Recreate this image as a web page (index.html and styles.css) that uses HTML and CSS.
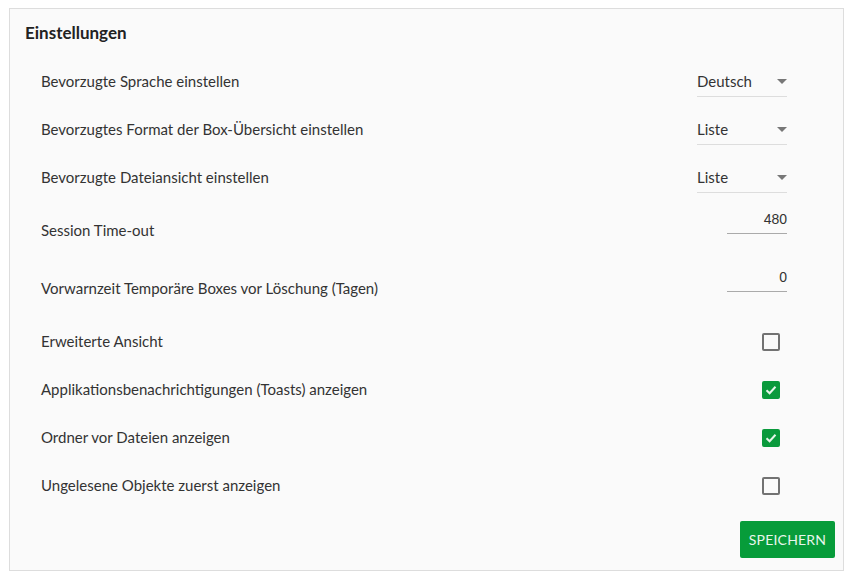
FILE: index.html
```html
<!DOCTYPE html>
<html lang="de">
<head>
    <meta charset="UTF-8">
    <title>Einstellungen</title>
    <link rel="stylesheet" href="styles.css">
</head>
<body>
    <div class="panel">
        <h1>Einstellungen</h1>

        <div class="row">
            <span class="label">Bevorzugte Sprache einstellen</span>
            <div class="select">Deutsch<span class="caret"></span></div>
        </div>
        <div class="row">
            <span class="label">Bevorzugtes Format der Box-Übersicht einstellen</span>
            <div class="select">Liste<span class="caret"></span></div>
        </div>
        <div class="row">
            <span class="label">Bevorzugte Dateiansicht einstellen</span>
            <div class="select">Liste<span class="caret"></span></div>
        </div>

        <div class="row row-input">
            <span class="label">Session Time-out</span>
            <div class="number">480</div>
        </div>
        <div class="row row-input">
            <span class="label">Vorwarnzeit Temporäre Boxes vor Löschung (Tagen)</span>
            <div class="number">0</div>
        </div>

        <div class="row">
            <span class="label">Erweiterte Ansicht</span>
            <span class="check"></span>
        </div>
        <div class="row">
            <span class="label">Applikationsbenachrichtigungen (Toasts) anzeigen</span>
            <span class="check checked">
                <svg width="14" height="14" viewBox="0 0 14 14"><path d="M2.5 7.2 L5.6 10.2 L11.5 3.8" fill="none" stroke="#e6f5ea" stroke-width="2"/></svg>
            </span>
        </div>
        <div class="row">
            <span class="label">Ordner vor Dateien anzeigen</span>
            <span class="check checked">
                <svg width="14" height="14" viewBox="0 0 14 14"><path d="M2.5 7.2 L5.6 10.2 L11.5 3.8" fill="none" stroke="#e6f5ea" stroke-width="2"/></svg>
            </span>
        </div>
        <div class="row">
            <span class="label">Ungelesene Objekte zuerst anzeigen</span>
            <span class="check"></span>
        </div>

        <div class="actions">
            <button class="save">SPEICHERN</button>
        </div>
    </div>
</body>
</html>
```

FILE: styles.css
```css
body {
    margin: 0;
    padding: 8px 12px 10px 9px;
    background-color: #ffffff;
    font-family: Lato, 'Open Sans', sans-serif;
    color: #333333;
}

.panel {
    background-color: #fafafa;
    border: 1px solid #dddddd;
    padding: 12px 8px 12px 15px;
}

h1 {
    margin: 0 0 12px 0;
    height: 24px;
    line-height: 24px;
    font-size: 17px;
    font-weight: 700;
    color: #222222;
}

.row {
    display: flex;
    align-items: center;
    justify-content: space-between;
    height: 48px;
    padding: 0 48px 0 16px;
}

.label {
    font-size: 15px;
}

.select {
    position: relative;
    box-sizing: border-box;
    width: 90px;
    height: 32px;
    line-height: 33px;
    font-size: 15px;
    border-bottom: 1px solid #dddddd;
    margin-top: -1px;
}

.caret {
    position: absolute;
    right: 0;
    top: 14px;
    width: 0;
    height: 0;
    border-left: 5px solid transparent;
    border-right: 5px solid transparent;
    border-top: 5px solid #777777;
}

/* number inputs sit above the label's centre line */
.row-input {
    align-items: flex-start;
    height: 58px;
}

.row-input .label {
    align-self: center;
}

.number {
    box-sizing: border-box;
    width: 60px;
    height: 29px;
    line-height: 28px;
    margin-top: 4px;
    text-align: right;
    font-family: 'Liberation Sans', Arial, sans-serif;
    font-size: 14px;
    color: #333333;
    border-bottom: 1px solid #aaaaaa;
}

.check {
    box-sizing: border-box;
    width: 18px;
    height: 18px;
    margin: 2px 7px 0 0;
    border: 2px solid #727272;
    border-radius: 2px;
    display: flex;
    align-items: center;
    justify-content: center;
}

.check.checked {
    background-color: #0a9a3c;
    border-color: #0a9a3c;
}

.actions {
    display: flex;
    justify-content: flex-end;
    margin-top: 12px;
}

.save {
    width: 95px;
    height: 37px;
    border: none;
    border-radius: 2px;
    background-color: #079c3a;
    color: #e8f6ec;
    font-family: Lato, 'Open Sans', sans-serif;
    font-size: 14px;
    letter-spacing: 0.2px;
    padding: 0;
}
```
